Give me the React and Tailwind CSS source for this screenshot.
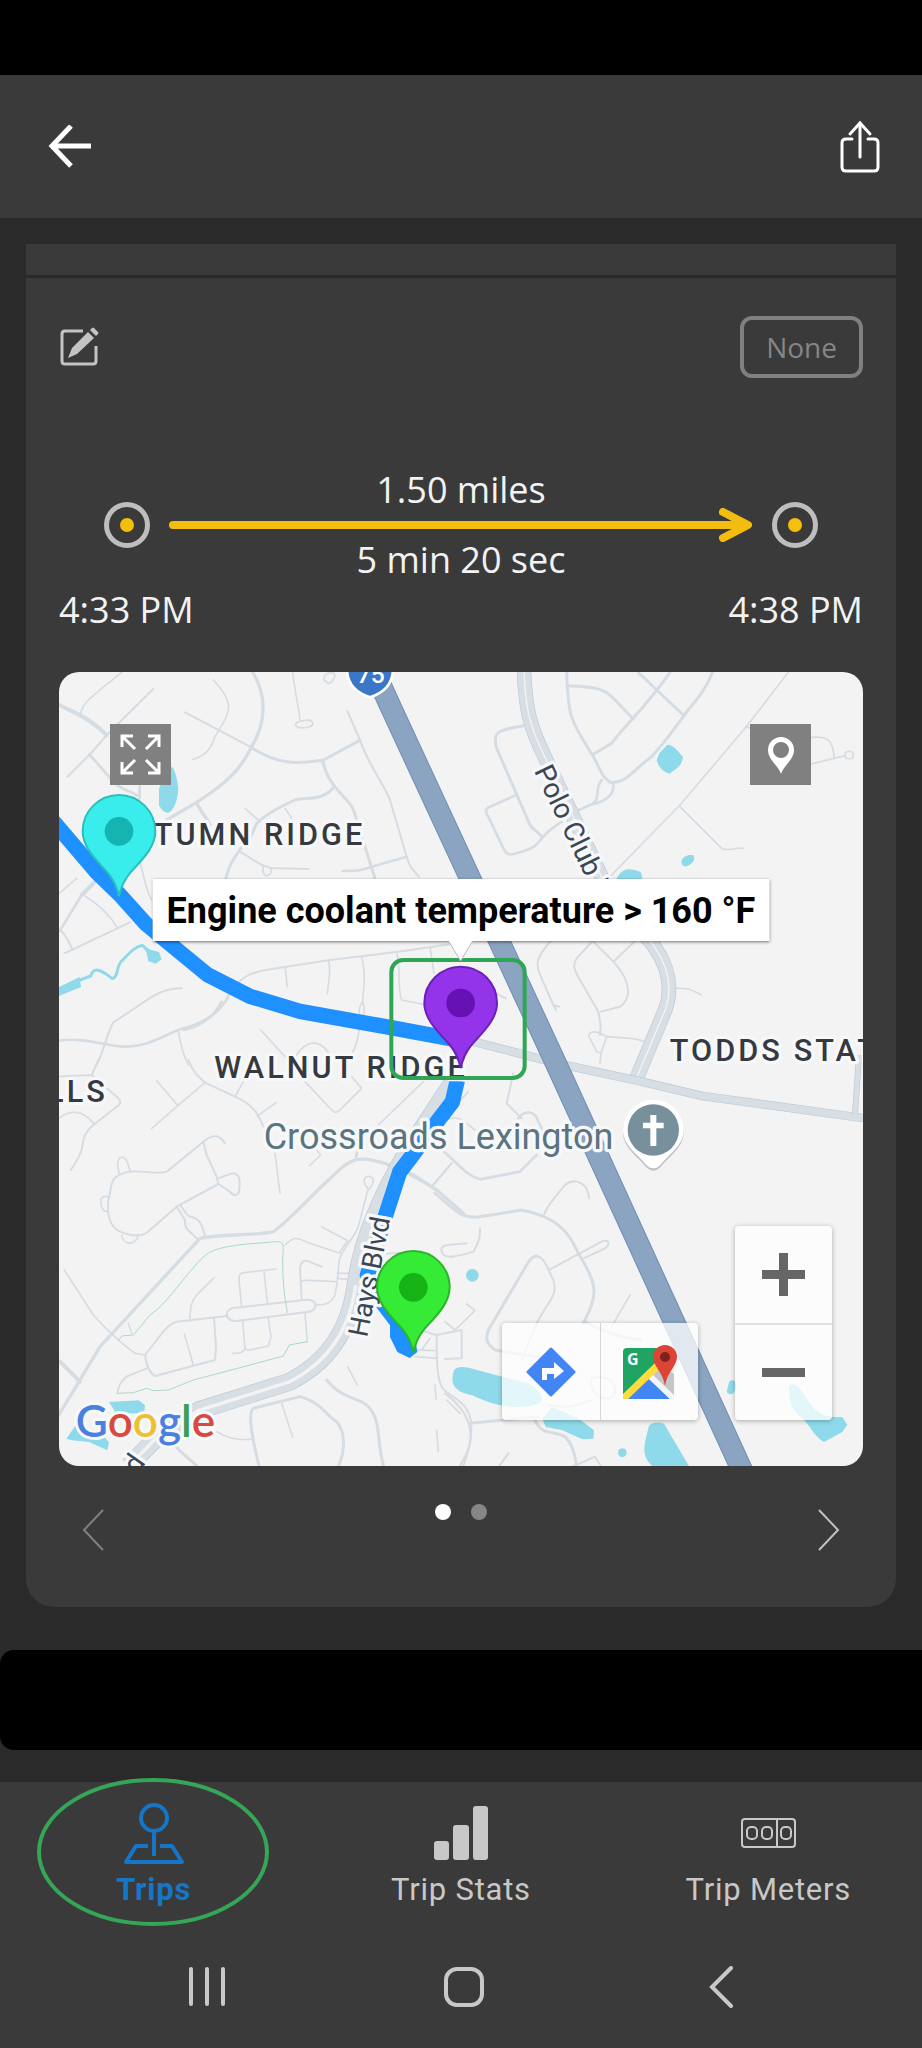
import React, { useState } from 'react';

// Streets, one list per quarter of the map: [stroke width, path]
const roadsNW = [
  [12, 'M20 115 C60 140 110 150 170 210'],
  [5, 'M92 145 C100 110 120 100 215 22'],
  [6, 'M310 72 L170 210 L120 268 L52 335'],
  [8, 'M118 268 L190 350 C210 375 240 375 268 395'],
  [8, 'M270 340 L268 400'],
  [5, 'M260 560 C280 610 280 660 305 705'],
  [10, 'M608 22 C650 90 650 170 605 245 C570 320 520 360 440 412 L350 465'],
  [5, 'M490 45 C560 120 540 140 495 215 C480 260 460 275 428 283'],
  [6, 'M405 142 L600 245'],
  [9, 'M600 245 C690 305 750 295 820 285 L930 226'],
  [9, 'M818 288 C830 340 850 360 880 395 C930 440 910 470 945 545 L975 640'],
  [9, 'M852 365 C820 410 770 395 735 405 C680 430 640 455 620 475 L600 520'],
  [6, 'M892 138 L930 226 C960 310 1010 370 1020 405 L1070 575 C1080 610 1090 615 1107 635'],
  [8, 'M1070 575 L965 605 C920 622 900 617 878 618'],
  [5, 'M728 22 C735 80 745 120 750 165'],
  [5, 'M740 185 C730 175 745 168 765 166 C790 162 795 178 780 185 C765 188 750 192 740 185Z'],
  [5, 'M822 45 C820 30 835 20 850 24 C862 32 845 55 835 55 Z'],
  [5, 'M585 430 L630 470'],
  [5, 'M705 430 L725 460'],
  [10, 'M440 415 C460 450 470 460 480 480'],
  [9, 'M527 640 C540 590 560 570 580 540'],
  [6, 'M570 560 C620 590 640 610 680 610 L775 612'],
  [5, 'M640 605 C635 630 650 640 662 625 L665 612'],
  [12, 'M145 640 L95 690'],
  [8, 'M95 690 L28 800'],
  [5, 'M28 685 L80 640'],
  [5, 'M105 693 C140 715 180 750 202 788'],
  [6, 'M43 865 L240 772'],
  [6, 'M30 795 C50 810 55 830 68 855'],
  [8, 'M20 1128 C100 1115 150 1140 220 1145 C300 1145 340 1110 400 1090 C480 1070 520 1030 540 985'],
  [8, 'M400 1095 C470 1080 500 1040 515 1010'],
  [6, 'M540 985 C580 920 620 920 690 908 L840 885 L1045 860 L1200 838'],
  [5, 'M705 905 L712 965'],
  [5, 'M835 885 C845 920 835 950 832 985'],
  [5, 'M935 875 C950 940 940 960 938 1010 C925 1030 925 1040 932 1060 L930 1060 C945 1050 945 1030 938 1010 M930 1060 C930 1110 920 1140 905 1170'],
  [5, 'M1040 860 C1055 930 1040 960 1055 1005 L1130 1020'],
  [5, 'M1140 845 L1152 925'],
  [6, 'M395 970 C320 970 290 1010 190 1072 C165 1120 165 1150 140 1200'],
  [5, 'M385 1100 C395 1150 400 1170 415 1200'],
  [5, 'M632 1095 C665 1130 690 1160 715 1185'],
  [5, 'M735 1175 C780 1110 820 1130 845 1180'],
];

const roadsNE = [
  [9, 'M205 182 C130 195 110 200 125 250 L225 480 C240 500 250 500 260 515'],
  [8, 'M183 390 L105 425 C90 430 90 440 100 455 L145 550 C155 570 165 570 180 566 C240 550 245 540 262 518 C280 495 300 485 320 470'],
  [9, 'M335 22 C340 160 345 160 415 275 C440 320 440 335 465 352 C510 360 540 310 590 275 C650 210 700 130 720 110 C760 60 765 40 772 22'],
  [9, 'M338 62 C420 65 450 70 480 105 L535 162'],
  [9, 'M645 22 C570 130 510 180 470 235 L415 268'],
  [9, 'M550 22 L605 75 L685 150'],
  [8, 'M440 345 C415 380 440 400 410 418 L350 445 M475 355 C480 390 450 410 410 418'],
  [5, 'M1000 22 L870 190 L675 420 L465 635'],
  [5, 'M675 425 L800 550 C820 562 840 545 865 550'],
  [5, 'M872 185 L890 190'],
  [5, 'M1065 218 C1120 210 1135 230 1137 278 M1065 298 L1170 272'],
  [5, 'M1170 270 C1170 255 1195 255 1195 270 C1195 285 1170 285 1170 270Z'],
  [6, 'M290 825 C240 880 240 900 260 940 L295 1020 L312 1025 M295 1020 L303 1035'],
  [6, 'M415 825 L365 880 C350 900 360 920 375 945 L430 1040 L437 1080 L435 1110'],
  [6, 'M415 830 L475 890 C530 950 530 1000 495 1025 L437 1040'],
  [6, 'M475 890 L540 828'],
  [5, 'M655 970 C700 968 710 975 740 990'],
  [5, 'M435 1105 C410 1095 395 1105 405 1120 L425 1160 L438 1165 L455 1115 L435 1105 M455 1115 C510 1120 530 1115 570 1130 M438 1165 L435 1195'],
  [6, 'M125 985 L152 1000'],
];

const roadsSW = [
  [6, 'M145 0 L125 45 L20 50 M125 45 L205 115 C215 125 210 135 200 140 L130 195 C100 220 100 240 95 270 C85 300 75 310 62 330'],
  [5, 'M20 180 C60 145 100 150 132 192'],
  [6, 'M415 0 C430 35 440 45 465 68 L555 110 C600 130 620 150 640 200'],
  [5, 'M555 110 L580 65'],
  [5, 'M465 68 L380 140 L305 205'],
  [5, 'M320 62 L382 135'],
  [5, 'M622 168 L678 128'],
  [5, 'M765 65 L845 150 C855 160 860 158 870 150 L935 85 L905 50'],
  [5, 'M1120 65 L985 195'],
  [5, 'M675 280 L690 400'],
  [5, 'M778 318 L812 285 L800 270'],
  [6, 'M525 250 C510 225 490 220 460 245 L350 335 C310 345 280 330 235 335 C190 345 185 360 180 400 C170 430 170 470 190 500 C220 530 280 535 300 510 L380 440 L505 372 L500 350 L470 285 L460 245'],
  [5, 'M208 340 C195 300 210 290 220 292 C235 300 232 315 242 335'],
  [5, 'M178 410 C150 405 150 420 155 440 C160 455 165 455 175 455'],
  [5, 'M215 525 C220 560 260 555 265 525'],
  [6, 'M505 355 L545 340 C570 340 570 360 568 385 C568 410 550 410 540 395 L505 372'],
  [6, 'M380 440 L405 480 C400 510 430 520 445 540 M390 435 L415 468 C450 475 455 490 465 528'],
  [10, 'M20 1075 L90 960 L150 860 L450 535 C520 520 600 530 670 515 C720 480 760 430 830 365 C900 300 910 280 1010 312 L1090 345 L1160 390 L1240 460'],
  [8, 'M918 290 L922 270'],
  [5, 'M945 372 C935 350 960 340 970 358 C970 375 960 385 955 390 Z M955 385 L925 500 C910 540 880 560 868 600 L862 660'],
  [5, 'M815 500 L893 542 L868 578'],
  [5, 'M705 555 C735 525 745 535 775 548 L870 580'],
  [5, 'M43 630 L130 765 C170 810 200 840 255 880 L285 885'],
  [6, 'M755 715 L750 625 C755 595 770 600 790 610 L815 620'],
  [5, 'M755 662 C790 658 820 665 862 665 L855 705 C840 735 820 735 795 735'],
  [5, 'M862 640 L920 640 M862 655 L920 660'],
  [6, 'M545 745 L760 720 C790 715 800 730 795 742 C790 755 780 755 765 757 L560 783 C530 785 520 755 545 745Z'],
  [5, 'M575 740 L567 660 C567 640 570 640 590 637 L678 627 M642 632 L652 728'],
  [5, 'M578 782 L585 865 C590 875 600 870 610 868 L655 858 L663 830 L655 775 M585 865 C580 880 565 880 548 880'],
  [6, 'M530 768 L380 785 C350 795 345 810 285 885 C290 920 300 940 315 948 L495 900 L498 860 L492 772'],
  [5, 'M420 775 C420 730 430 715 450 695 L493 652'],
  [5, 'M403 822 L430 915'],
  [5, 'M765 762 L772 845'],
  [6, 'M290 925 L230 950 C210 965 205 980 202 1000'],
  [12, 'M30 905 L90 965'],
  [5, 'M235 790 L245 820'],
  [9, 'M830 960 C880 1020 920 1010 950 1035 C1000 1080 975 1150 1005 1230'],
  [9, 'M750 1010 L610 1045 C590 1060 610 1150 630 1230 M750 1010 C820 1030 830 1070 860 1085 C890 1120 885 1180 860 1230'],
  [5, 'M695 1030 L728 1132'],
  [5, 'M500 1115 C530 1135 560 1140 605 1138'],
  [9, 'M370 1150 C400 1190 430 1200 450 1230'],
  [5, 'M893 920 L922 975'],
  [6, 'M1175 575 C1170 555 1180 555 1250 550 M1175 575 C1180 600 1220 590 1270 575 C1290 540 1290 530 1290 505'],
  [5, 'M1000 582 L1050 578'],
  [5, 'M1100 870 L1155 872 M1095 890 L1160 895 M1115 870 L1140 835'],
  [6, 'M1110 810 L1160 825 L1235 810 L1235 895 L1185 897 M1160 825 C1160 900 1160 950 1175 980 C1190 1010 1250 1015 1262 1080 C1270 1130 1255 1180 1235 1230'],
  [5, 'M1185 785 L1215 810 L1275 752 L1250 732'],
  [5, 'M1155 975 L1158 1018 M1160 1110 L1165 1175 M1190 1020 L1230 1060'],
  [7, 'M1080 345 L1145 380 L1205 310'],
];

const roadsSE = [
  [6, 'M175 40 L155 130 L200 175'],
  [8, 'M-40 270 C0 300 30 345 75 358 L195 335 L245 285 M190 175 C210 150 240 150 250 185 L262 210'],
  [9, 'M-60 400 C0 450 10 470 65 472 L200 450 C300 470 340 510 370 580 C430 680 430 700 385 790'],
  [6, 'M268 462 C280 430 310 400 330 375 C360 350 400 370 402 415'],
  [6, 'M285 628 L440 545 C465 535 465 555 450 565 L380 598'],
  [9, 'M245 588 C230 590 225 600 215 615 L100 810 C90 840 95 850 120 870 L300 900'],
  [6, 'M245 588 C270 595 275 620 295 660 C310 710 280 720 245 790 L200 900'],
  [5, 'M525 705 L470 800'],
  [5, 'M40 95 L-5 145'],
  [5, 'M-40 185 C0 170 0 160 60 210'],
  [9, 'M385 785 C480 830 500 830 560 840'],
  [7, 'M280 1035 C350 1050 380 1030 410 1020 M410 955 C470 940 490 980 475 1010 C450 1030 400 1000 410 955Z'],
  [9, 'M240 1080 C260 1130 300 1110 330 1130 C360 1160 360 1200 365 1218 M45 1090 L250 1070'],
  [6, 'M160 1180 L125 1230 M330 1230 L420 1190 L445 1230'],
  [6, 'M-30 1000 C50 1060 50 1120 45 1150 C40 1180 20 1200 10 1230'],
];

const water = [
  'M300 350 L325 290 C340 270 352 300 358 350 C355 390 345 410 330 422 C318 425 308 415 300 400Z',
  'M0 945 L62 915 L66 945 L0 972Z',
  'M1800 245 L1825 218 C1840 218 1850 228 1872 255 C1868 285 1850 290 1832 305 C1815 300 1800 290 1793 265Z',
  'M1868 565 C1870 555 1890 545 1902 550 C1910 560 1905 570 1890 580 C1875 588 1865 580 1868 565Z',
  'M1675 615 C1690 590 1710 585 1745 600 L1750 615 L1735 650 L1660 640Z',
  'M1185 2095 C1195 2080 1220 2085 1240 2090 L1410 2135 C1440 2150 1460 2180 1440 2195 C1380 2215 1310 2205 1240 2170 C1190 2160 1170 2140 1185 2095Z',
  'M1450 2240 L1480 2205 L1560 2240 L1605 2275 L1603 2300 L1570 2302 L1510 2275 L1460 2265Z',
  'M1770 2262 C1780 2250 1800 2250 1815 2255 L1890 2382 L1780 2382 C1745 2350 1755 2320 1770 2262Z',
  'M2190 2145 C2200 2130 2215 2140 2230 2160 C2260 2200 2270 2240 2350 2235 L2365 2258 L2350 2280 L2295 2310 C2260 2290 2250 2250 2215 2225 C2190 2200 2190 2170 2190 2145Z',
  'M2010 2130 C2020 2120 2030 2125 2032 2140 C2028 2165 2015 2175 2003 2160Z',
  'M150 2190 L240 2185 L258 2200 L255 2225 L170 2222Z',
  'M22 2300 L50 2260 L130 2290 L150 2310 L145 2335 L90 2310 L40 2305Z',
];

const PIN =
  'M0 0 C-5 -22 -12 -44 -30 -66 C-60 -102 -109 -142 -109 -195 A109 109 0 0 1 109 -195 C109 -142 60 -102 30 -66 C12 -44 5 -22 0 0Z';

const Roads = ({ list, transform }) => (
  <g transform={transform} fill="none" stroke="#d5dce2" strokeLinecap="round" strokeLinejoin="round">
    {list.map(([width, d], i) => (
      <path key={i} d={d} strokeWidth={width} />
    ))}
  </g>
);

// wide road with thin outlines on both sides
const MainRoad = ({ d, width = 26 }) => (
  <g fill="none">
    <path d={d} stroke="#bccad6" strokeWidth={width} />
    <path d={d} stroke="#d7dfe5" strokeWidth={width - 4} />
  </g>
);

const Marker = ({ x, y, fill, stroke, dot }) => (
  <g transform={`translate(${x} ${y})`}>
    <path d={PIN} fill={fill} stroke={stroke} strokeWidth="6" />
    <circle cx="0" cy="-195" r="43" fill={dot} />
  </g>
);

const MapCanvas = () => (
  <svg
    className="block w-full h-[794px] bg-[#f4f3f4]"
    viewBox="0 0 2412 2382"
    preserveAspectRatio="xMidYMid slice"
    style={{ fontFamily: 'Roboto, sans-serif' }}
    role="img"
    aria-label="Trip map"
  >
    <g fill="#8fdaea">
      {water.map((d) => (
        <path key={d} d={d} />
      ))}
      <circle cx="1240" cy="1810" r="19" />
      <circle cx="1690" cy="2342" r="13" />
    </g>
    <path
      d="M60 925 L95 912 C105 880 130 900 140 905 L160 920 C180 915 170 880 190 865 C210 845 225 825 250 820 L285 850"
      fill="none"
      stroke="#8fdaea"
      strokeWidth="9"
    />
    <path d="M245 815 L265 830 L300 840 L308 862 L290 875 L268 868 L262 840Z" fill="#8fdaea" />

    <Roads list={roadsNW} transform="translate(-27 -21)" />
    <Roads list={roadsNE} transform="translate(1188 -21)" />
    <Roads list={roadsSW} transform="translate(-27 1164)" />
    <Roads list={roadsSE} transform="translate(1188 1164)" />

    {/* footpaths */}
    <g fill="none" stroke="#a9d8c8" strokeWidth="3" transform="translate(-27 1164)">
      <path d="M205 842 L215 828 L250 825 L300 765 C350 730 380 680 420 635 C470 575 480 565 590 552 L680 545 C705 545 700 560 698 600 C698 680 705 710 712 758" />
      <path d="M202 1000 L250 998 L290 985 L310 992 L355 990 L430 960 L600 915 L700 888 L718 855 L772 845" />
    </g>

    <MainRoad d="M1395 0 C1400 110 1410 160 1460 260 L1640 640 C1690 740 1760 780 1790 830 C1830 890 1840 950 1820 1010 L1730 1225" width={44} />
    <path d="M1395 0 C1400 110 1410 160 1460 260 L1640 640 C1690 740 1760 780 1790 830 C1830 890 1840 950 1820 1010 L1730 1225" fill="none" stroke="#f4f3f4" strokeWidth="4" />
    <MainRoad d="M1200 1098 L1500 1175 L1730 1225 L1930 1272 L2412 1338" />
    <MainRoad d="M2400 1150 L2388 1325" width={18} />
    <MainRoad d="M1185 1225 L1050 1430 C960 1580 905 1720 890 1840 C870 1990 790 2080 690 2130 L420 2215 L290 2300 L210 2382" width={54} />
    <path d="M890 1840 C870 1990 790 2080 690 2130 L420 2215 L290 2300 L210 2382" fill="none" stroke="#f4f3f4" strokeWidth="10" />

    {/* interstate */}
    <path d="M930 -40 L983 79 L1486 1164 L2056 2410" fill="none" stroke="#6f8fb6" strokeWidth="66" />
    <path d="M930 -40 L983 79 L1486 1164 L2056 2410" fill="none" stroke="#8aa4c1" strokeWidth="60" />
    <path
      d="M864 -10 C864 36 890 62 933 76 C976 62 1002 36 1002 -10Z"
      fill="#3b76c8"
      stroke="#fff"
      strokeWidth="8"
    />
    <text x="935" y="32" textAnchor="middle" className="text-[74px] font-medium" fill="#fff">75</text>

    {/* driven route */}
    <g fill="none" stroke="#1e90ff" strokeWidth="46" strokeLinejoin="round">
      <path d="M-20 445 L113 601 L183 669 L260 755 L320 805 L445 908 L573 973 L723 1018 L980 1064 L1200 1105" />
      <path d="M1195 1225 L1180 1290 L1130 1355 L1060 1450 L1022 1500 L975 1645 L925 1810 L960 1905" />
    </g>
    <path d="M940 1890 L1000 1900 L1070 2010 L1075 2040 L1052 2058 L1015 2040 L993 1995 L993 1960Z" fill="#1e90ff" />

    <g stroke="#f7f8f9" strokeWidth="20" strokeLinejoin="round" paintOrder="stroke" fill="#36393f">
      <g className="text-[92px] font-medium tracking-widest">
        <text x="284" y="518">TUMN RIDGE</text>
        <text x="466" y="1218">WALNUT RIDGE</text>
        <text x="1832" y="1166">TODDS STATION</text>
        <text x="147" y="1289" textAnchor="end">HILLS</text>
      </g>
      <text x="614" y="1430" className="text-[108px]" fill="#5b7480">Crossroads Lexington</text>
      <text transform="translate(924 1998) rotate(-79)" className="text-[83px]" fill="#3a4654">Hays Blvd</text>
      <text transform="translate(1424 296) rotate(64)" className="text-[84px]" fill="#3a4654">Polo Club Rd</text>
      <text transform="translate(262 2372) rotate(-55)" className="text-[84px]" fill="#3a4654" textAnchor="end">Rd</text>
    </g>

    {/* church */}
    <g transform="translate(1783 1374)">
      <path d="M-91 0 A91 91 0 1 1 91 0 C91 45 50 70 22 104 Q0 126 -22 104 C-50 70 -91 45 -91 0Z" fill="#9aa0a6" transform="translate(0 7)" opacity="0.6" />
      <path d="M-91 0 A91 91 0 1 1 91 0 C91 45 50 70 22 104 Q0 126 -22 104 C-50 70 -91 45 -91 0Z" fill="#fff" />
      <circle r="77" fill="#78909c" />
      <path d="M-9 -45 H9 V-22 H31 V-5 H9 V48 H-9 V-5 H-31 V-22 H-9Z" fill="#fff" />
    </g>

    <Marker x={180} y={673} fill="#38edeb" stroke="#2bbfbc" dot="#15b3b1" />
    <Marker x={1063} y={2041} fill="#36eb36" stroke="#2ab52a" dot="#15b315" />
    <Marker x={1205} y={1188} fill="#9333ea" stroke="#6b21b5" dot="#6611b3" />
    <rect x="997" y="864" width="400" height="354" rx="36" fill="none" stroke="#2fa655" strokeWidth="12" />

    <text x="50" y="2296" className="text-[132px] font-semibold" stroke="#f7f8f9" strokeWidth="18" strokeLinejoin="round" paintOrder="stroke" style={{ fontFamily: 'Lato, sans-serif' }}>
      <tspan fill="#4a80e0">G</tspan>
      <tspan fill="#d84a3f">o</tspan>
      <tspan fill="#eec02f">o</tspan>
      <tspan fill="#4a80e0">g</tspan>
      <tspan fill="#3a9f55">l</tspan>
      <tspan fill="#d84a3f">e</tspan>
    </text>
  </svg>
);

const Chevron = ({ flip, className }) => (
  <svg width="22" height="42" viewBox="0 0 22 42" fill="none" className={className}>
    <path d={flip ? 'M1 1 L20 21 L1 41' : 'M21 1 L2 21 L21 41'} stroke="currentColor" strokeWidth="2" />
  </svg>
);

const StopDot = () => (
  <span className="flex size-[46px] shrink-0 items-center justify-center rounded-full border-5 border-[#bebebe]">
    <span className="size-[14px] rounded-full bg-[#f5bd0c]" />
  </span>
);

const MapButton = ({ label, className, children }) => (
  <button aria-label={label} className={`flex h-[97px] items-center justify-center ${className}`}>
    {children}
  </button>
);

const TripsIcon = () => (
  <svg width="62" height="62" viewBox="0 0 62 62" fill="none" stroke="currentColor" strokeWidth="4" strokeLinejoin="round">
    <circle cx="31" cy="16" r="13" />
    <path d="M31 29 V54" />
    <path d="M25 44 H13 L3 60 H59 L49 44 H37" />
  </svg>
);

const StatsIcon = () => (
  <svg width="54" height="54" viewBox="0 0 54 54" fill="currentColor">
    <rect x="0" y="35" width="15" height="19" rx="3" />
    <rect x="19" y="19" width="16" height="35" rx="3" />
    <rect x="39" y="0" width="15" height="54" rx="3" />
  </svg>
);

const MetersIcon = () => (
  <svg width="55" height="30" viewBox="0 0 55 30" fill="none" stroke="currentColor" strokeWidth="2">
    <rect x="1" y="1" width="53" height="28" rx="3" />
    <path d="M36 1 V29" />
    <rect x="6" y="9" width="10" height="12" rx="4" />
    <rect x="21" y="9" width="10" height="12" rx="4" />
    <rect x="40" y="9" width="10" height="12" rx="4" />
  </svg>
);

const tabs = [
  { id: 'trips', label: 'Trips', Icon: TripsIcon },
  { id: 'stats', label: 'Trip Stats', Icon: StatsIcon },
  { id: 'meters', label: 'Trip Meters', Icon: MetersIcon },
];

const App = () => {
  const [tab, setTab] = useState('trips');
  const [slide, setSlide] = useState(0);

  return (
    <div className="flex min-h-screen flex-col bg-[#2a2a2a] text-[#f2f2f2]" style={{ fontFamily: '"Open Sans", sans-serif' }}>
      <div className="h-[75px] bg-black" />

      <header className="flex items-center justify-between bg-[#3a3a3a] h-[143px] pl-12 pr-[41px] text-white">
        <button aria-label="Back">
          <svg width="44" height="44" viewBox="0 0 44 44" fill="none" stroke="currentColor" strokeWidth="5">
            <path d="M43 21 H5" />
            <path d="M23 1 L4 21 L23 41" />
          </svg>
        </button>
        <button aria-label="Share">
          <svg width="42" height="54" viewBox="0 0 42 54" fill="none" stroke="currentColor" strokeWidth="3" strokeLinecap="round">
            <path d="M21 37 V3" />
            <path d="M11 14 L21 3 L31 14" />
            <path d="M13 19 H7 Q3 19 3 23 V47 Q3 51 7 51 H35 Q39 51 39 47 V23 Q39 19 35 19 H29" />
          </svg>
        </button>
      </header>

      <main className="px-[26px] pt-[26px]">
        <div className="h-[31px] bg-[#3a3a3a]" />
        <section className="mt-[3px] rounded-b-[28px] bg-[#3a3a3a] px-[33px] pt-[38px]">
          <div className="flex items-center justify-between">
            <button aria-label="Edit trip" className="text-[#c4c4c4]">
              <svg width="40" height="40" viewBox="0 0 40 40" fill="none">
                <path d="M24 4 H6 Q3 4 3 7 V34 Q3 37 6 37 H34 Q37 37 37 34 V19" stroke="currentColor" strokeWidth="3" />
                <path d="M13 21 L29 5 L35 11 L18 27 L9 31Z" fill="currentColor" />
                <path d="M31 3 L33 1 Q34 0 35 1 L39 5 Q40 6 39 7 L37 9Z" fill="currentColor" />
              </svg>
            </button>
            <button className="h-[62px] rounded-[12px] border-4 border-[#808080] px-[22px] text-[28px] text-[#858585]">
              None
            </button>
          </div>

          <div className="mt-[92px] flex items-center gap-[19px] px-[45px]">
            <StopDot />
            <div className="flex-1 text-center text-[36px] leading-10">
              <p>1.50 miles</p>
              {/* trip arrow */}
              <div className="flex h-[30px] items-center">
                <span className="h-2 flex-1 rounded-l-full bg-[#f2bd10]" />
                <svg width="34" height="34" viewBox="0 0 34 34" fill="none" className="shrink-0">
                  <path d="M0 17 H28" stroke="#f2bd10" strokeWidth="8" />
                  <path d="M4 4 L29 17 L4 30" stroke="#f2bd10" strokeWidth="8" strokeLinecap="round" strokeLinejoin="round" />
                </svg>
              </div>
              <p>5 min 20 sec</p>
            </div>
            <StopDot />
          </div>

          <div className="mt-2.5 flex justify-between text-[36px] leading-10">
            <span>4:33 PM</span>
            <span>4:38 PM</span>
          </div>

          <div className="relative mt-[42px] overflow-hidden rounded-[20px]">
            <MapCanvas />

            <button aria-label="Full screen" className="absolute left-[51px] top-[52px] flex size-[61px] items-center justify-center bg-[#808080]">
              <svg width="41" height="41" viewBox="0 0 41 41" fill="none" stroke="#fff" strokeWidth="3">
                <path d="M2 13 V2 H13 M2 2 L15 15" />
                <path d="M28 2 H39 V13 M39 2 L26 15" />
                <path d="M2 28 V39 H13 M2 39 L15 26" />
                <path d="M39 28 V39 H28 M39 39 L26 26" />
              </svg>
            </button>
            <button aria-label="Show pins" className="absolute right-[52px] top-[52px] flex size-[61px] items-center justify-center bg-[#808080]">
              <svg width="28" height="38" viewBox="0 0 28 38">
                <path d="M14 38 C12 30 1 24 1 14 A13 13 0 0 1 27 14 C27 24 16 30 14 38Z M14 6 A8 8 0 1 0 14 22 A8 8 0 1 0 14 6Z" fill="#fff" fillRule="evenodd" />
              </svg>
            </button>

            <div className="absolute left-1/2 top-[207px] -translate-x-1/2 whitespace-nowrap bg-white px-3.5 pt-0.5 text-[36px] font-bold leading-[60px] text-black shadow-[0_1px_3px_rgba(0,0,0,0.55)]" style={{ fontFamily: 'Roboto, sans-serif' }}>
              Engine coolant temperature &gt; 160 °F
              <svg width="24" height="20" viewBox="0 0 24 20" className="absolute left-1/2 top-full -translate-x-1/2">
                <path d="M0 0 L12 20 L24 0" fill="#fff" stroke="#bbb" strokeWidth="1" />
              </svg>
            </div>

            <div className="absolute bottom-[46px] right-[31px] flex items-end gap-[37px]">
              <div className="flex rounded-sm bg-white/75 shadow-[0_1px_5px_rgba(0,0,0,0.3)]">
                <MapButton label="Directions" className="w-[98px]">
                  <svg width="50" height="50" viewBox="0 0 50 50">
                    <path d="M25 2 L48 25 L25 48 L2 25Z" fill="#4285f4" stroke="#4285f4" strokeWidth="3" strokeLinejoin="round" />
                    <path d="M16 33 V21 H28 V15 L38 24 L28 32 V27 H21 V33Z" fill="#fff" />
                  </svg>
                </MapButton>
                <MapButton label="Open in Google Maps" className="w-[98px] border-l border-black/15">
                  <svg width="56" height="56" viewBox="0 0 56 56">
                    <rect x="1" y="4" width="51" height="51" rx="4" fill="#e8eaed" />
                    <path d="M52 30 L38 20 L28 34 L52 55Z" fill="#c4c7ca" />
                    <path d="M1 54 V8 Q1 4 5 4 H38 V20Z" fill="#1fa463" />
                    <path d="M1 55 V50 L35 17 L39 24 L6 55Z" fill="#fddc3c" />
                    <path d="M6 55 L27 35 L48 55Z" fill="#4285f4" />
                    <path d="M27 35 L31 31 L52 51 V55 H48Z" fill="#f4f5f6" />
                    <path d="M43 42 C41 28 31 22 31 13 A12 12 0 0 1 55 13 C55 22 45 28 43 42Z" fill="#db4437" />
                    <circle cx="43" cy="13" r="5" fill="#7b231c" />
                    <text x="5" y="21" className="text-[16px] font-bold" fill="#fff">G</text>
                  </svg>
                </MapButton>
              </div>
              <div className="flex flex-col rounded-sm bg-white/75 shadow-[0_1px_5px_rgba(0,0,0,0.3)]">
                <MapButton label="Zoom in" className="w-[97px]">
                  <svg width="43" height="43" viewBox="0 0 43 43" stroke="#666" strokeWidth="9">
                    <path d="M0 21.5 H43 M21.5 0 V43" />
                  </svg>
                </MapButton>
                <MapButton label="Zoom out" className="w-[97px] border-t-2 border-black/10">
                  <svg width="43" height="9" viewBox="0 0 43 9" fill="#666">
                    <rect width="43" height="9" />
                  </svg>
                </MapButton>
              </div>
            </div>
          </div>

          <div className="flex h-[141px] items-start justify-between px-[23px] pt-[38px]">
            <button aria-label="Previous" disabled={slide === 0} onClick={() => setSlide(0)} className="mt-[5px] text-white disabled:text-[#808080]">
              <Chevron />
            </button>
            <div className="flex gap-5">
              {[0, 1].map((i) => (
                <button
                  key={i}
                  aria-label={`Slide ${i + 1}`}
                  onClick={() => setSlide(i)}
                  className={slide === i ? 'size-4 rounded-full bg-white' : 'size-4 rounded-full bg-[#868686]'}
                />
              ))}
            </div>
            <button aria-label="Next" onClick={() => setSlide(1)} className="mt-[5px] text-[#c0c0c0]">
              <Chevron flip />
            </button>
          </div>
        </section>
      </main>

      <div className="mt-[43px] h-[100px] rounded-l-[14px] bg-black" />

      <footer className="mt-8 flex-1 bg-[#3a3a3a]">
        <nav className="grid grid-cols-3 pt-4 text-[31px]" style={{ fontFamily: 'Roboto, sans-serif' }}>
          {tabs.map(({ id, label, Icon }) => (
            <button
              key={id}
              onClick={() => setTab(id)}
              className={`relative flex flex-col items-center gap-1 ${tab === id ? 'font-bold text-[#1576c8]' : 'text-[#c8c8c8]'}`}
            >
              <span className="flex h-[70px] items-center">
                <Icon />
              </span>
              <span className="leading-9 tracking-wide">{label}</span>
              {tab === id && (
                <svg width="234" height="148" viewBox="0 0 234 148" fill="none" className="pointer-events-none absolute -top-5 left-1/2 -translate-x-1/2">
                  <ellipse cx="116" cy="74" rx="114" ry="72" stroke="#35a658" strokeWidth="4" />
                </svg>
              )}
            </button>
          ))}
        </nav>

        <div className="grid grid-cols-3 items-center pb-9 pl-[78px] pr-[72px] pt-[58px] text-[#c8c8c8]">
          <button aria-label="Recents" className="flex justify-center">
            <svg width="38" height="42" viewBox="0 0 38 42" stroke="currentColor" strokeWidth="4" strokeLinecap="round">
              <path d="M3 3 V38 M19 3 V38 M35 3 V38" />
            </svg>
          </button>
          <button aria-label="Home" className="flex justify-center">
            <svg width="42" height="42" viewBox="0 0 42 42" fill="none" stroke="currentColor" strokeWidth="4">
              <rect x="3" y="3" width="36" height="36" rx="11" />
            </svg>
          </button>
          <button aria-label="System back" className="flex justify-center">
            <svg width="26" height="42" viewBox="0 0 26 42" fill="none" stroke="currentColor" strokeWidth="4" strokeLinecap="round">
              <path d="M23 2 L4 21 L23 40" />
            </svg>
          </button>
        </div>
      </footer>
    </div>
  );
};

export default App;
